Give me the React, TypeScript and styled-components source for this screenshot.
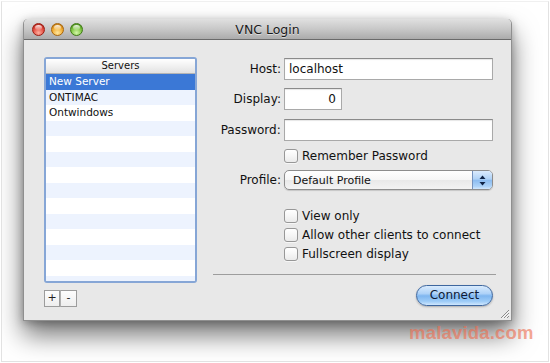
import React from 'react';
import styled, { createGlobalStyle } from 'styled-components';

const GlobalStyle = createGlobalStyle`
    html, body {
        margin: 0;
        padding: 0;
        background: #ffffff;
    }
    body {
        font-family: "DejaVu Sans", "Noto Sans", sans-serif;
        color: #111;
    }
`;

const Page = styled.div`
    position: relative;
    width: 548px;
    height: 361px;
    margin: 1px;
    box-sizing: border-box;
    border: 1px solid #e2e2e2;
    border-top-color: #f0f0f0;
    padding: 17px 0 0 21px;
    overflow: hidden;
`;

const Window = styled.div`
    position: relative;
    width: 489px;
    border-radius: 5px 5px 0 0;
    background: #e8e8e8;
    border: 1px solid #8f8f8f;
    border-top: none;
    box-sizing: border-box;
    box-shadow: 0 14px 26px rgba(0, 0, 0, 0.55), 0 2px 8px rgba(0, 0, 0, 0.25);
`;

const TitleBar = styled.div`
    position: relative;
    height: 21px;
    box-sizing: border-box;
    border-radius: 5px 5px 0 0;
    background: linear-gradient(#e0e0e0, #c8c8c8 50%, #ababab);
    border-bottom: 1px solid #6a6a6a;
    display: flex;
    align-items: center;
    padding-left: 8px;
`;

const Lights = styled.div`
    display: flex;
    gap: 6px;
`;

const Light = styled.span<{ $base: string; $light: string; $dark: string }>`
    position: relative;
    width: 13px;
    height: 13px;
    border-radius: 50%;
    box-sizing: border-box;
    border: 1px solid ${({ $dark }) => $dark};
    background: radial-gradient(circle at 50% 80%, ${({ $light }) => $light} 0%, ${({ $base }) => $base} 55%, ${({ $dark }) => $dark} 100%);

    &::after {
        content: '';
        position: absolute;
        left: 2px;
        top: 1px;
        width: 7px;
        height: 5px;
        border-radius: 50%;
        background: linear-gradient(rgba(255, 255, 255, 0.9), rgba(255, 255, 255, 0.1));
    }
`;

const Title = styled.div`
    position: absolute;
    left: 0;
    right: 0;
    top: 3px;
    text-align: center;
    font-size: 12.5px;
    color: #1a1a1a;
    text-shadow: 0 1px 0 rgba(255, 255, 255, 0.5);
    pointer-events: none;
`;

const Content = styled.div`
    display: flex;
    gap: 16px;
    padding: 17px 20px 13px 20px;
`;

const LeftColumn = styled.div`
    display: flex;
    flex-direction: column;
    gap: 7px;
`;

const ListBox = styled.div`
    width: 153px;
    height: 226px;
    box-sizing: border-box;
    border: 2px solid #86a6d6;
    border-radius: 3px;
    background: #fff;
    overflow: hidden;
`;

const ListHeader = styled.div`
    height: 15px;
    box-sizing: border-box;
    border-bottom: 1px solid #b4b4b4;
    background: linear-gradient(#ffffff, #f1f1f1 50%, #e2e2e2);
    font-size: 10px;
    line-height: 14px;
    text-align: center;
    color: #111;
`;

const ListRow = styled.div<{ $selected?: boolean; $odd?: boolean }>`
    height: 15.5px;
    padding-left: 3px;
    font-size: 10.5px;
    line-height: 15.5px;
    white-space: nowrap;
    color: ${({ $selected }) => ($selected ? '#fff' : '#111')};
    background: ${({ $selected, $odd }) => ($selected ? '#3b78d6' : $odd ? '#edf3fe' : '#ffffff')};
`;

const SegButtons = styled.div`
    display: flex;
`;

const SegButton = styled.div`
    width: 16px;
    height: 17px;
    box-sizing: border-box;
    border: 1px solid #9c9c9c;
    background: linear-gradient(#fdfdfd, #eeeeee);
    font-size: 11px;
    line-height: 14px;
    text-align: center;
    color: #222;

    & + & {
        border-left: 1px solid #b0b0b0;
        width: 17px;
    }
`;

const RightColumn = styled.div`
    width: 280px;
    display: flex;
    flex-direction: column;
    padding-top: 1px;
`;

const Row = styled.div<{ $mt?: number; $h: number }>`
    display: flex;
    align-items: center;
    gap: 3px;
    height: ${({ $h }) => $h}px;
    margin-top: ${({ $mt }) => $mt ?? 0}px;
`;

const Label = styled.div`
    width: 68px;
    text-align: right;
    font-size: 12px;
    color: #111;
    white-space: nowrap;
`;

const TextField = styled.div<{ $width: number; $align?: 'left' | 'right' }>`
    width: ${({ $width }) => $width}px;
    height: 22px;
    box-sizing: border-box;
    background: #fff;
    border: 1px solid #a9a9a9;
    border-top-color: #8a8a8a;
    box-shadow: inset 0 1px 1px rgba(0, 0, 0, 0.1);
    padding: 0 5px 0 4px;
    font-size: 12px;
    line-height: 20px;
    text-align: ${({ $align }) => $align ?? 'left'};
    color: #111;
`;

const CheckLine = styled.label`
    display: flex;
    align-items: center;
    gap: 4px;
    font-size: 12px;
    color: #111;
    white-space: nowrap;
`;

const CheckBox = styled.span`
    width: 14px;
    height: 14px;
    box-sizing: border-box;
    border: 1px solid #979797;
    border-radius: 3px;
    background: linear-gradient(#ffffff, #f6f6f6 50%, #ebebeb);
    box-shadow: 0 1px 0 rgba(255, 255, 255, 0.6);
`;

const Popup = styled.div`
    position: relative;
    width: 209px;
    height: 20px;
    box-sizing: border-box;
    border: 1px solid #8d8d8d;
    border-radius: 5px;
    background: linear-gradient(#ffffff, #f6f6f6 50%, #e9e9e9 52%, #f3f3f3);
    box-shadow: 0 1px 1px rgba(0, 0, 0, 0.15);
    display: flex;
    align-items: center;
    overflow: hidden;
`;

const PopupText = styled.span`
    flex: 1;
    padding-left: 8px;
    font-size: 11px;
    color: #111;
`;

const Stepper = styled.span`
    width: 19px;
    height: 100%;
    border-left: 1px solid #7592bd;
    background: linear-gradient(#dbebfd, #b0d2f6 45%, #8cbcf0 52%, #acd2f8 85%, #d2e8fe);
    display: flex;
    align-items: center;
    justify-content: center;
`;

const Separator = styled.div`
    height: 1px;
    margin: 11px -3px 0 0;
    background: #9d9d9d;
`;

const ConnectButton = styled.div`
    align-self: flex-end;
    width: 77px;
    height: 21px;
    margin-top: 10px;
    box-sizing: border-box;
    border: 1px solid #3e679f;
    border-radius: 11px;
    background: linear-gradient(#d9ebfd 0%, #aed2f8 40%, #7fb6f0 52%, #9ccbf7 80%, #cfe7fe 100%);
    box-shadow: 0 1px 2px rgba(0, 0, 0, 0.25);
    font-size: 12px;
    line-height: 19px;
    text-align: center;
    color: #0e1a36;
`;

const Grip = styled.svg`
    position: absolute;
    right: 1px;
    bottom: 1px;
`;

const Watermark = styled.div`
    position: absolute;
    left: 407px;
    top: 320px;
    font-family: "Liberation Sans", Arial, sans-serif;
    font-weight: bold;
    font-size: 18.5px;
    color: rgba(238, 108, 78, 0.62);
    letter-spacing: 0.2px;
`;

const servers = ['New Server', 'ONTIMAC', 'Ontwindows'];

function StepperArrows() {
    return (
        <svg width="7" height="11" viewBox="0 0 7 11">
            <path d="M3.5 0.5 L6.5 4 L0.5 4 Z" fill="#0f2346" />
            <path d="M3.5 10.5 L6.5 7 L0.5 7 Z" fill="#0f2346" />
        </svg>
    );
}

function Check({ label }: { label: string }) {
    return (
        <CheckLine>
            <CheckBox />
            {label}
        </CheckLine>
    );
}

export default function App() {
    const rows = Array.from({ length: 14 }, (_, i) => servers[i] ?? '');

    return (
        <>
            <GlobalStyle />
            <Page>
                <Window>
                    <TitleBar>
                        <Lights>
                            <Light $base="#e2483c" $light="#ffb0a0" $dark="#9b1c12" />
                            <Light $base="#f0a92c" $light="#ffe7a0" $dark="#a8650c" />
                            <Light $base="#79c13c" $light="#d4f7a8" $dark="#3f7a16" />
                        </Lights>
                        <Title>VNC Login</Title>
                    </TitleBar>
                    <Content>
                        <LeftColumn>
                            <ListBox>
                                <ListHeader>Servers</ListHeader>
                                {rows.map((name, i) => (
                                    <ListRow key={i} $selected={i === 0} $odd={i % 2 === 1}>
                                        {name}
                                    </ListRow>
                                ))}
                            </ListBox>
                            <SegButtons>
                                <SegButton>+</SegButton>
                                <SegButton>-</SegButton>
                            </SegButtons>
                        </LeftColumn>
                        <RightColumn>
                            <Row $h={22}>
                                <Label>Host:</Label>
                                <TextField $width={209}>localhost</TextField>
                            </Row>
                            <Row $h={22} $mt={8}>
                                <Label>Display:</Label>
                                <TextField $width={58} $align="right">0</TextField>
                            </Row>
                            <Row $h={22} $mt={9}>
                                <Label>Password:</Label>
                                <TextField $width={210} />
                            </Row>
                            <Row $h={19} $mt={5}>
                                <Label />
                                <Check label="Remember Password" />
                            </Row>
                            <Row $h={20} $mt={5}>
                                <Label>Profile:</Label>
                                <Popup>
                                    <PopupText>Default Profile</PopupText>
                                    <Stepper>
                                        <StepperArrows />
                                    </Stepper>
                                </Popup>
                            </Row>
                            <Row $h={19} $mt={16}>
                                <Label />
                                <Check label="View only" />
                            </Row>
                            <Row $h={19}>
                                <Label />
                                <Check label="Allow other clients to connect" />
                            </Row>
                            <Row $h={19}>
                                <Label />
                                <Check label="Fullscreen display" />
                            </Row>
                            <Separator />
                            <ConnectButton>Connect</ConnectButton>
                        </RightColumn>
                    </Content>
                    <Grip width="11" height="11" viewBox="0 0 11 11">
                        <path d="M10 2 L2 10 M10 5 L5 10 M10 8 L8 10" stroke="#8a8a8a" strokeWidth="1" />
                        <path d="M10.5 3 L3 10.5 M10.5 6 L6 10.5" stroke="#ffffff" strokeWidth="0.8" />
                    </Grip>
                </Window>
                <Watermark>malavida.com</Watermark>
            </Page>
        </>
    );
}
